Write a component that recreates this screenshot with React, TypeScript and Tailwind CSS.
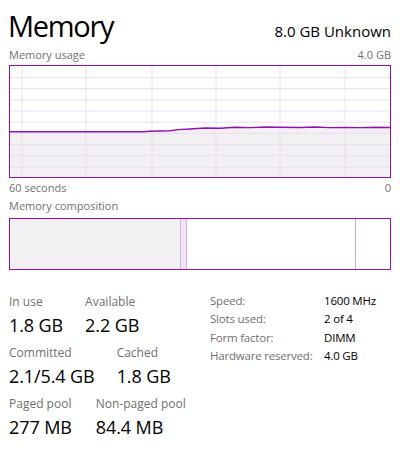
import React from "react";

const font = { fontFamily: '"Segoe UI", "Open Sans", "Noto Sans", sans-serif' };

function UsageChart() {
  const W = 380;
  const H = 111;
  const vLines = [12, 76, 142, 206, 270, 335];
  const hLines = Array.from({ length: 9 }, (_, i) => (i + 1) * 11.2 + 0.2);
  const pts: [number, number][] = [
    [0, 65.7],
    [133, 65.7],
    [140, 65.2],
    [160, 64.8],
    [168, 63.6],
    [180, 63.0],
    [195, 62.0],
    [210, 62.3],
    [225, 61.3],
    [240, 61.6],
    [255, 61.0],
    [270, 61.2],
    [290, 61.5],
    [305, 61.0],
    [320, 61.6],
    [335, 61.4],
    [350, 61.6],
    [365, 61.2],
    [380, 61.5],
  ];
  const line = pts.map((p, i) => `${i === 0 ? "M" : "L"}${p[0]},${p[1]}`).join(" ");
  const area = `${line} L${W},${H} L0,${H} Z`;
  return (
    <svg width={W} height={H} className="block">
      <path d={area} fill="#f2f0f3" />
      {hLines.map((y) => (
        <line key={y} x1={0} x2={W} y1={y} y2={y} stroke="#ecdcf2" strokeWidth={1} />
      ))}
      {vLines.map((x) => (
        <line key={x} x1={x} x2={x} y1={0} y2={H} stroke="#ecdcf2" strokeWidth={1} />
      ))}
      <path d={line} fill="none" stroke="#8b12ae" strokeWidth={1.4} />
    </svg>
  );
}

function Stat({ label, value }: { label: string; value: string }) {
  return (
    <div className="flex flex-col">
      <div className="text-[12px] leading-[16px] text-[#6f6f6f]">{label}</div>
      <div className="mt-[4px] text-[18px] leading-[22px] text-black tracking-[-0.1px]">{value}</div>
    </div>
  );
}

export default function App() {
  const rows: [string, string][] = [
    ["Speed:", "1600 MHz"],
    ["Slots used:", "2 of 4"],
    ["Form factor:", "DIMM"],
    ["Hardware reserved:", "4.0 GB"],
  ];
  return (
    <div className="w-[400px] h-[471px] bg-white overflow-hidden" style={font}>
      <div className="w-[382px] ml-[9px]">
        <div className="flex items-baseline justify-between pt-[8px]">
          <div className="text-[29px] leading-[36px] text-black -ml-[1px] tracking-[-1.3px]">Memory</div>
          <div className="text-[15px] leading-[20px] text-black">8.0 GB Unknown</div>
        </div>
        <div className="mt-[4px] flex justify-between text-[11px] leading-[14px] text-[#707070]">
          <span>Memory usage</span>
          <span>4.0 GB</span>
        </div>
        <div className="mt-[3px] h-[113px] border border-[#8b12ae] bg-white">
          <UsageChart />
        </div>
        <div className="mt-[3px] flex justify-between text-[11px] leading-[14px] text-[#707070]">
          <span>60 seconds</span>
          <span>0</span>
        </div>
        <div className="mt-[4px] text-[11px] leading-[14px] text-[#707070]">Memory composition</div>
        <div className="mt-[5px] h-[52px] border border-[#8b12ae] flex">
          <div className="w-[170px] bg-[#f2f0f3]" />
          <div className="w-[7px] bg-[#f1e6f5] border-x border-[#d7aee4]" />
          <div className="w-[169px] bg-white border-r border-[#c9a7d6]" />
          <div className="flex-1 bg-white" />
        </div>
        <div className="mt-[24px] flex">
          <div className="w-[201px] flex flex-col gap-[9px]">
            <div className="flex gap-[22px]">
              <Stat label="In use" value="1.8 GB" />
              <Stat label="Available" value="2.2 GB" />
            </div>
            <div className="flex gap-[22px]">
              <Stat label="Committed" value="2.1/5.4 GB" />
              <Stat label="Cached" value="1.8 GB" />
            </div>
            <div className="flex gap-[24px]">
              <Stat label="Paged pool" value="277 MB" />
              <Stat label="Non-paged pool" value="84.4 MB" />
            </div>
          </div>
          <div className="-mt-[2px] flex flex-col text-[11.5px] leading-[18.3px] tracking-[-0.2px]">
            {rows.map(([k, v]) => (
              <div key={k} className="flex">
                <span className="w-[114px] text-[#6f6f6f]">{k}</span>
                <span className="text-black">{v}</span>
              </div>
            ))}
          </div>
        </div>
      </div>
    </div>
  );
}
